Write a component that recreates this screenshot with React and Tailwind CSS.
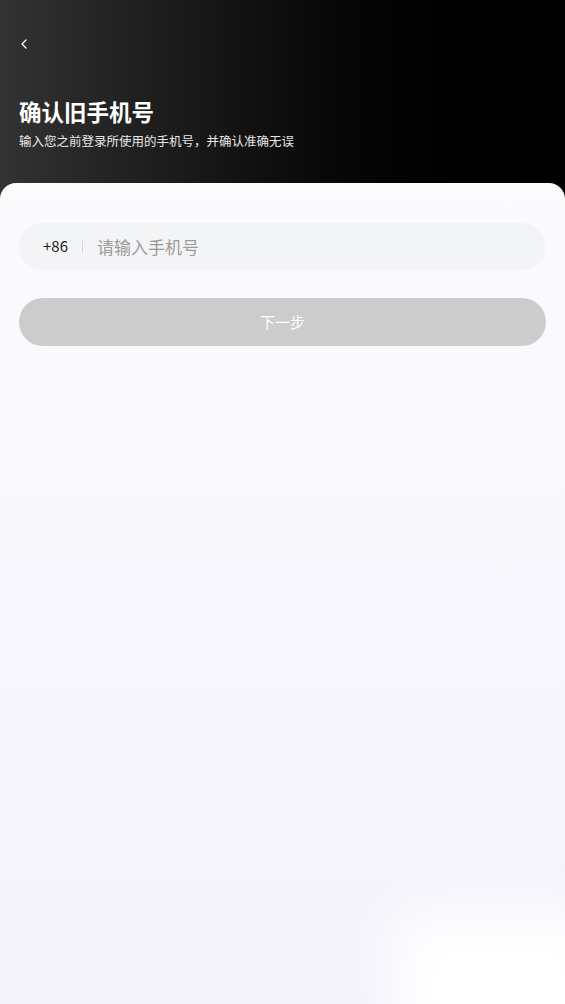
import { ChevronLeft } from 'lucide-react'

export default function App() {
  return (
    <div
      className="relative w-[565px] h-[1004px] overflow-hidden bg-gradient-to-r from-[#333333] to-[#000000]"
      style={{ fontFamily: '"Noto Sans CJK SC", "Noto Sans", sans-serif' }}
    >
      <div className="h-[183px] flex flex-col px-[19px]">
        <div className="h-[96px] pt-[36px]">
          <ChevronLeft className="w-[16px] h-[16px] text-white -ml-[3px]" strokeWidth={2} />
        </div>
        <h1 className="text-[22.5px] leading-[30px] font-bold text-white">确认旧手机号</h1>
        <p className="text-[12.5px] leading-[18px] text-white/90 mt-[6px]">输入您之前登录所使用的手机号，并确认准确无误</p>
      </div>

      <div className="relative h-[821px] rounded-t-[16px] overflow-hidden bg-gradient-to-b from-[#fbfbfe] to-[#f4f3fc] px-[19px] pt-[40px]">
        <div className="absolute right-[-40px] bottom-[-60px] w-[210px] h-[150px] bg-white blur-[28px]" />
        <div className="relative flex items-center h-[47px] rounded-full bg-[#f3f4f6] pl-[24px]">
          <span className="text-[15px] text-[#222]">+86</span>
          <span className="mx-[14px] w-px h-[12px] bg-[#d6d6d6]" />
          <span className="text-[17px] text-[#9a9a9a]">请输入手机号</span>
        </div>
        <button className="relative mt-[28px] w-full h-[48px] rounded-full bg-[#cccccc] text-white text-[15px]">
          下一步
        </button>
      </div>
    </div>
  )
}
